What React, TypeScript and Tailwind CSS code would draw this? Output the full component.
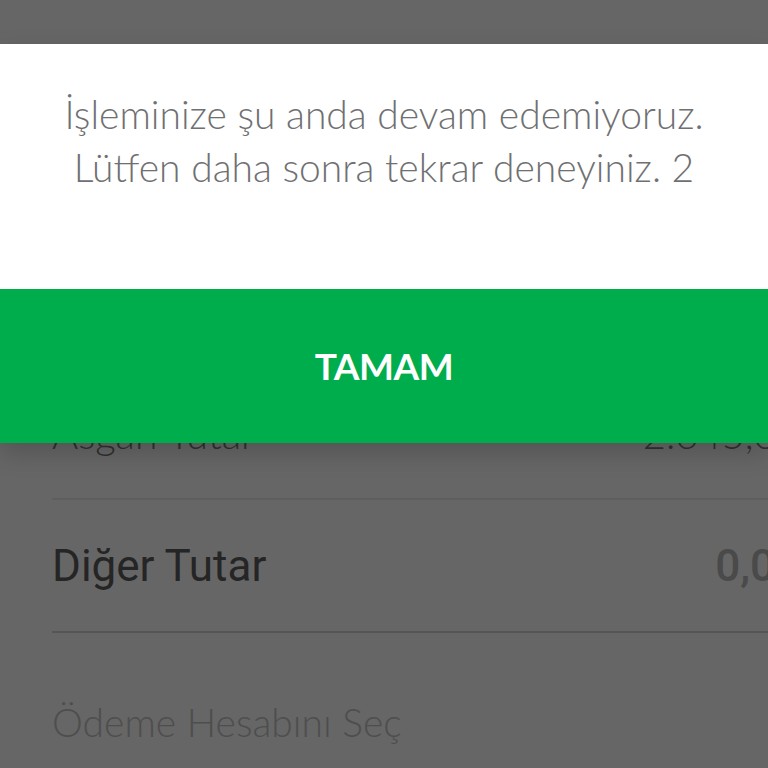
import React from "react";

const rowText = "font-['Roboto',sans-serif]";

export default function App() {
  return (
    <div className="relative h-[768px] w-[768px] overflow-hidden bg-white">
      {/* page under the dialog */}
      <div className="w-[800px] pl-[52px] pt-[370px]">
        <div className="flex h-[130px] items-center justify-between border-b-2 border-[#ececec]">
          <span className="font-['Lato',sans-serif] text-[40px] font-light text-[#7a7a7a]">Asgari Tutar</span>
          <span className="font-['Lato',sans-serif] text-[40px] font-light text-[#7a7a7a]">2.645,00</span>
        </div>
        <div className="flex h-[133px] items-center justify-between border-b-2 border-[#d4d4d4]">
          <span className={`${rowText} text-[44px] text-[#5e5e5e]`}>Diğer Tutar</span>
          <span className={`${rowText} text-[44px] font-medium text-[#b8b8b8]`}>0,00</span>
        </div>
        <div className="mt-[66px] font-['Lato',sans-serif] text-[39px] font-light leading-[46px] text-[#c4c4c4]">
          Ödeme Hesabını Seç
        </div>
      </div>

      {/* dim */}
      <div className="absolute inset-0 bg-black/60" />

      {/* alert */}
      <div className="absolute left-0 right-0 top-[44px] shadow-[0_10px_24px_rgba(0,0,0,0.18)]">
        <div className="bg-white pb-[95px] pt-[44px] text-center font-['Lato',sans-serif] text-[39px] font-light leading-[53px] text-[#6f7072]">
          <p>İşleminize şu anda devam edemiyoruz.</p>
          <p>Lütfen daha sonra tekrar deneyiniz. 2</p>
        </div>
        <button className="flex h-[154px] w-full items-center justify-center bg-[#00ad4c] font-['Lato',sans-serif] text-[37px] font-bold tracking-[-0.5px] text-white">
          TAMAM
        </button>
      </div>
    </div>
  );
}
